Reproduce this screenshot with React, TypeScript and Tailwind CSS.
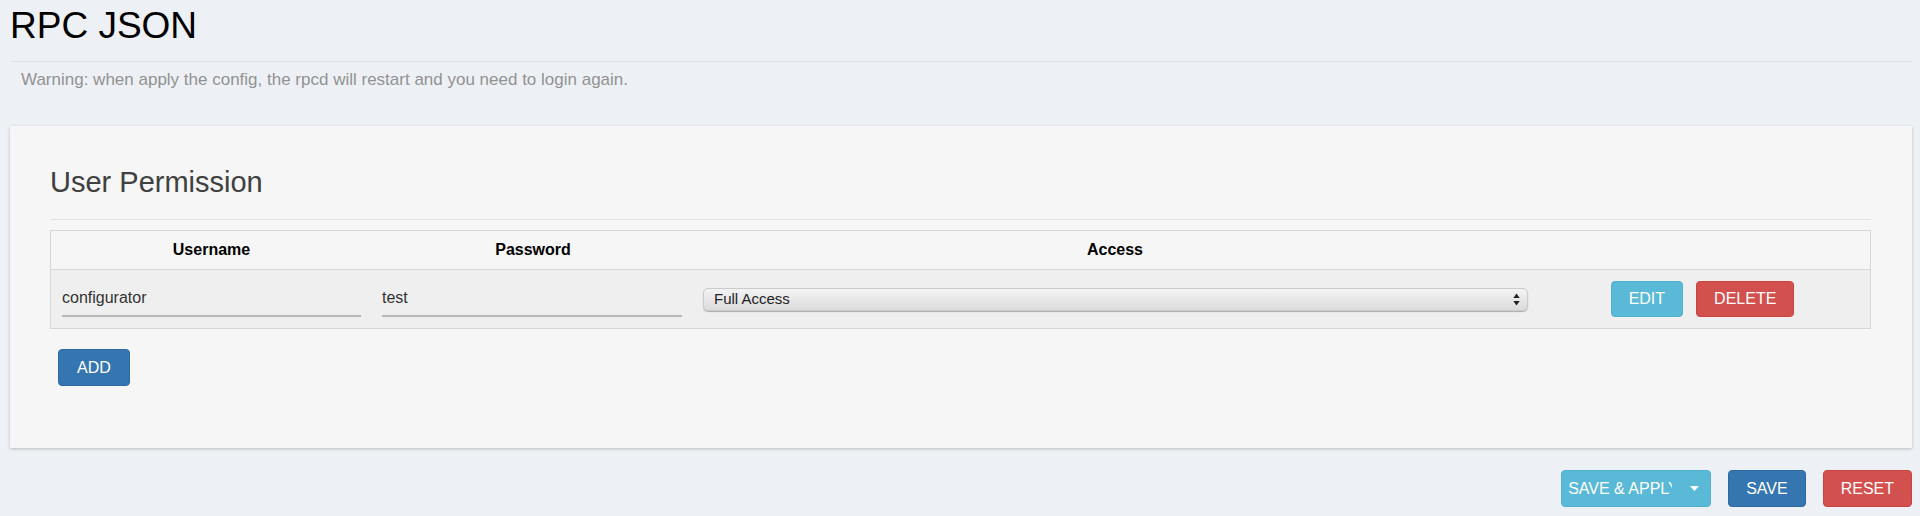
import React from "react";

function Btn({
  children,
  color,
  className = "",
}: {
  children: React.ReactNode;
  color: "info" | "danger" | "primary";
  className?: string;
}) {
  const c =
    color === "info"
      ? "bg-[#5ab9d7] border-[#4fb1d0]"
      : color === "danger"
      ? "bg-[#d2504d] border-[#c9443f]"
      : "bg-[#3576b0] border-[#2e6aa1]";
  return (
    <button
      type="button"
      className={`flex items-center justify-center rounded-[4px] border text-[16px] leading-[20px] text-white uppercase ${c} ${className}`}
    >
      {children}
    </button>
  );
}

function SelectArrows() {
  return (
    <svg width="7" height="13" viewBox="0 0 7 13" className="text-[#222]">
      <polygon points="0.3,5 3.5,0.6 6.7,5" fill="currentColor" />
      <polygon points="0.3,8 3.5,12.4 6.7,8" fill="currentColor" />
    </svg>
  );
}

export default function App() {
  return (
    <div className="min-h-[516px] w-full bg-[#edf1f5] pl-[10px] pr-[8px] pb-[9px] font-['Liberation_Sans',Arial,sans-serif]">
      <div className="pt-[6px]">
        <h1 className="text-[37px] leading-[40px] font-normal text-black">RPC JSON</h1>
      </div>
      <div className="mt-[15px] h-px bg-[#dde2e6]" />
      <p className="mt-[8px] pl-[11px] text-[17px] leading-[20px] text-[#929292]">
        Warning: when apply the config, the rpcd will restart and you need to login again.
      </p>

      <div className="mt-[36px] bg-[#f5f6f5] pt-[40px] pl-[40px] pr-[41px] pb-[62px] shadow-[0_1px_3px_rgba(0,0,0,0.22)]">
        <h2 className="text-[29px] leading-[32px] font-normal text-[#404040]">User Permission</h2>
        <div className="mt-[21px] h-px bg-[#e2e4e4]" />

        <div className="mt-[10px] border border-[#d6d6d6]">
          <div className="grid h-[39px] grid-cols-[321px_322px_842px_1fr] items-center border-b border-[#d6d6d6] text-[16px] leading-[20px] font-bold text-black">
            <div className="text-center">Username</div>
            <div className="text-center">Password</div>
            <div className="text-center">Access</div>
            <div />
          </div>
          <div className="grid h-[58px] grid-cols-[321px_322px_842px_1fr] items-center bg-[#efefef]">
            <div className="pl-[11px] pr-[11px] pt-[4px]">
              <input
                readOnly
                defaultValue="configurator"
                className="block h-[32px] w-full border-0 border-b-2 border-[#b7b7b7] bg-transparent p-0 pb-[4px] text-[16px] text-[#333] outline-none"
              />
            </div>
            <div className="pl-[10px] pr-[12px] pt-[4px]">
              <input
                readOnly
                defaultValue="test"
                className="block h-[32px] w-full border-0 border-b-2 border-[#b7b7b7] bg-transparent p-0 pb-[4px] text-[16px] text-[#333] outline-none"
              />
            </div>
            <div className="pl-[9px] pr-[8px]">
              <div className="flex h-[23px] items-center justify-between rounded-[5px] border border-[#cbcbcb] bg-gradient-to-b from-[#f3f3f3] to-[#dcdcdc] pl-[10px] pr-[7px] text-[15px] leading-[18px] text-[#222] shadow-[0_1px_1px_rgba(0,0,0,0.28)]">
                <span>Full Access</span>
                <SelectArrows />
              </div>
            </div>
            <div className="flex justify-center gap-[13px] pr-[1px]">
              <Btn color="info" className="h-[36px] px-[17px]">
                Edit
              </Btn>
              <Btn color="danger" className="h-[36px] px-[17px]">
                Delete
              </Btn>
            </div>
          </div>
        </div>

        <div className="mt-[20px] ml-[8px] flex">
          <Btn color="primary" className="h-[37px] px-[18px]">
            Add
          </Btn>
        </div>
      </div>

      <div className="mt-[22px] flex justify-end gap-[17px]">
        <Btn color="info" className="h-[37px] w-[150px] !justify-start pl-[6px] pr-[11px]">
          <span className="block w-[105px] overflow-hidden whitespace-nowrap text-left">SAVE &amp; APPLY</span>
          <svg width="9" height="5" viewBox="0 0 9 5" className="ml-[18px]">
            <polygon points="0,0 9,0 4.5,5" fill="white" />
          </svg>
        </Btn>
        <Btn color="primary" className="h-[37px] px-[17px]">
          Save
        </Btn>
        <Btn color="danger" className="h-[37px] px-[17px]">
          Reset
        </Btn>
      </div>
    </div>
  );
}
